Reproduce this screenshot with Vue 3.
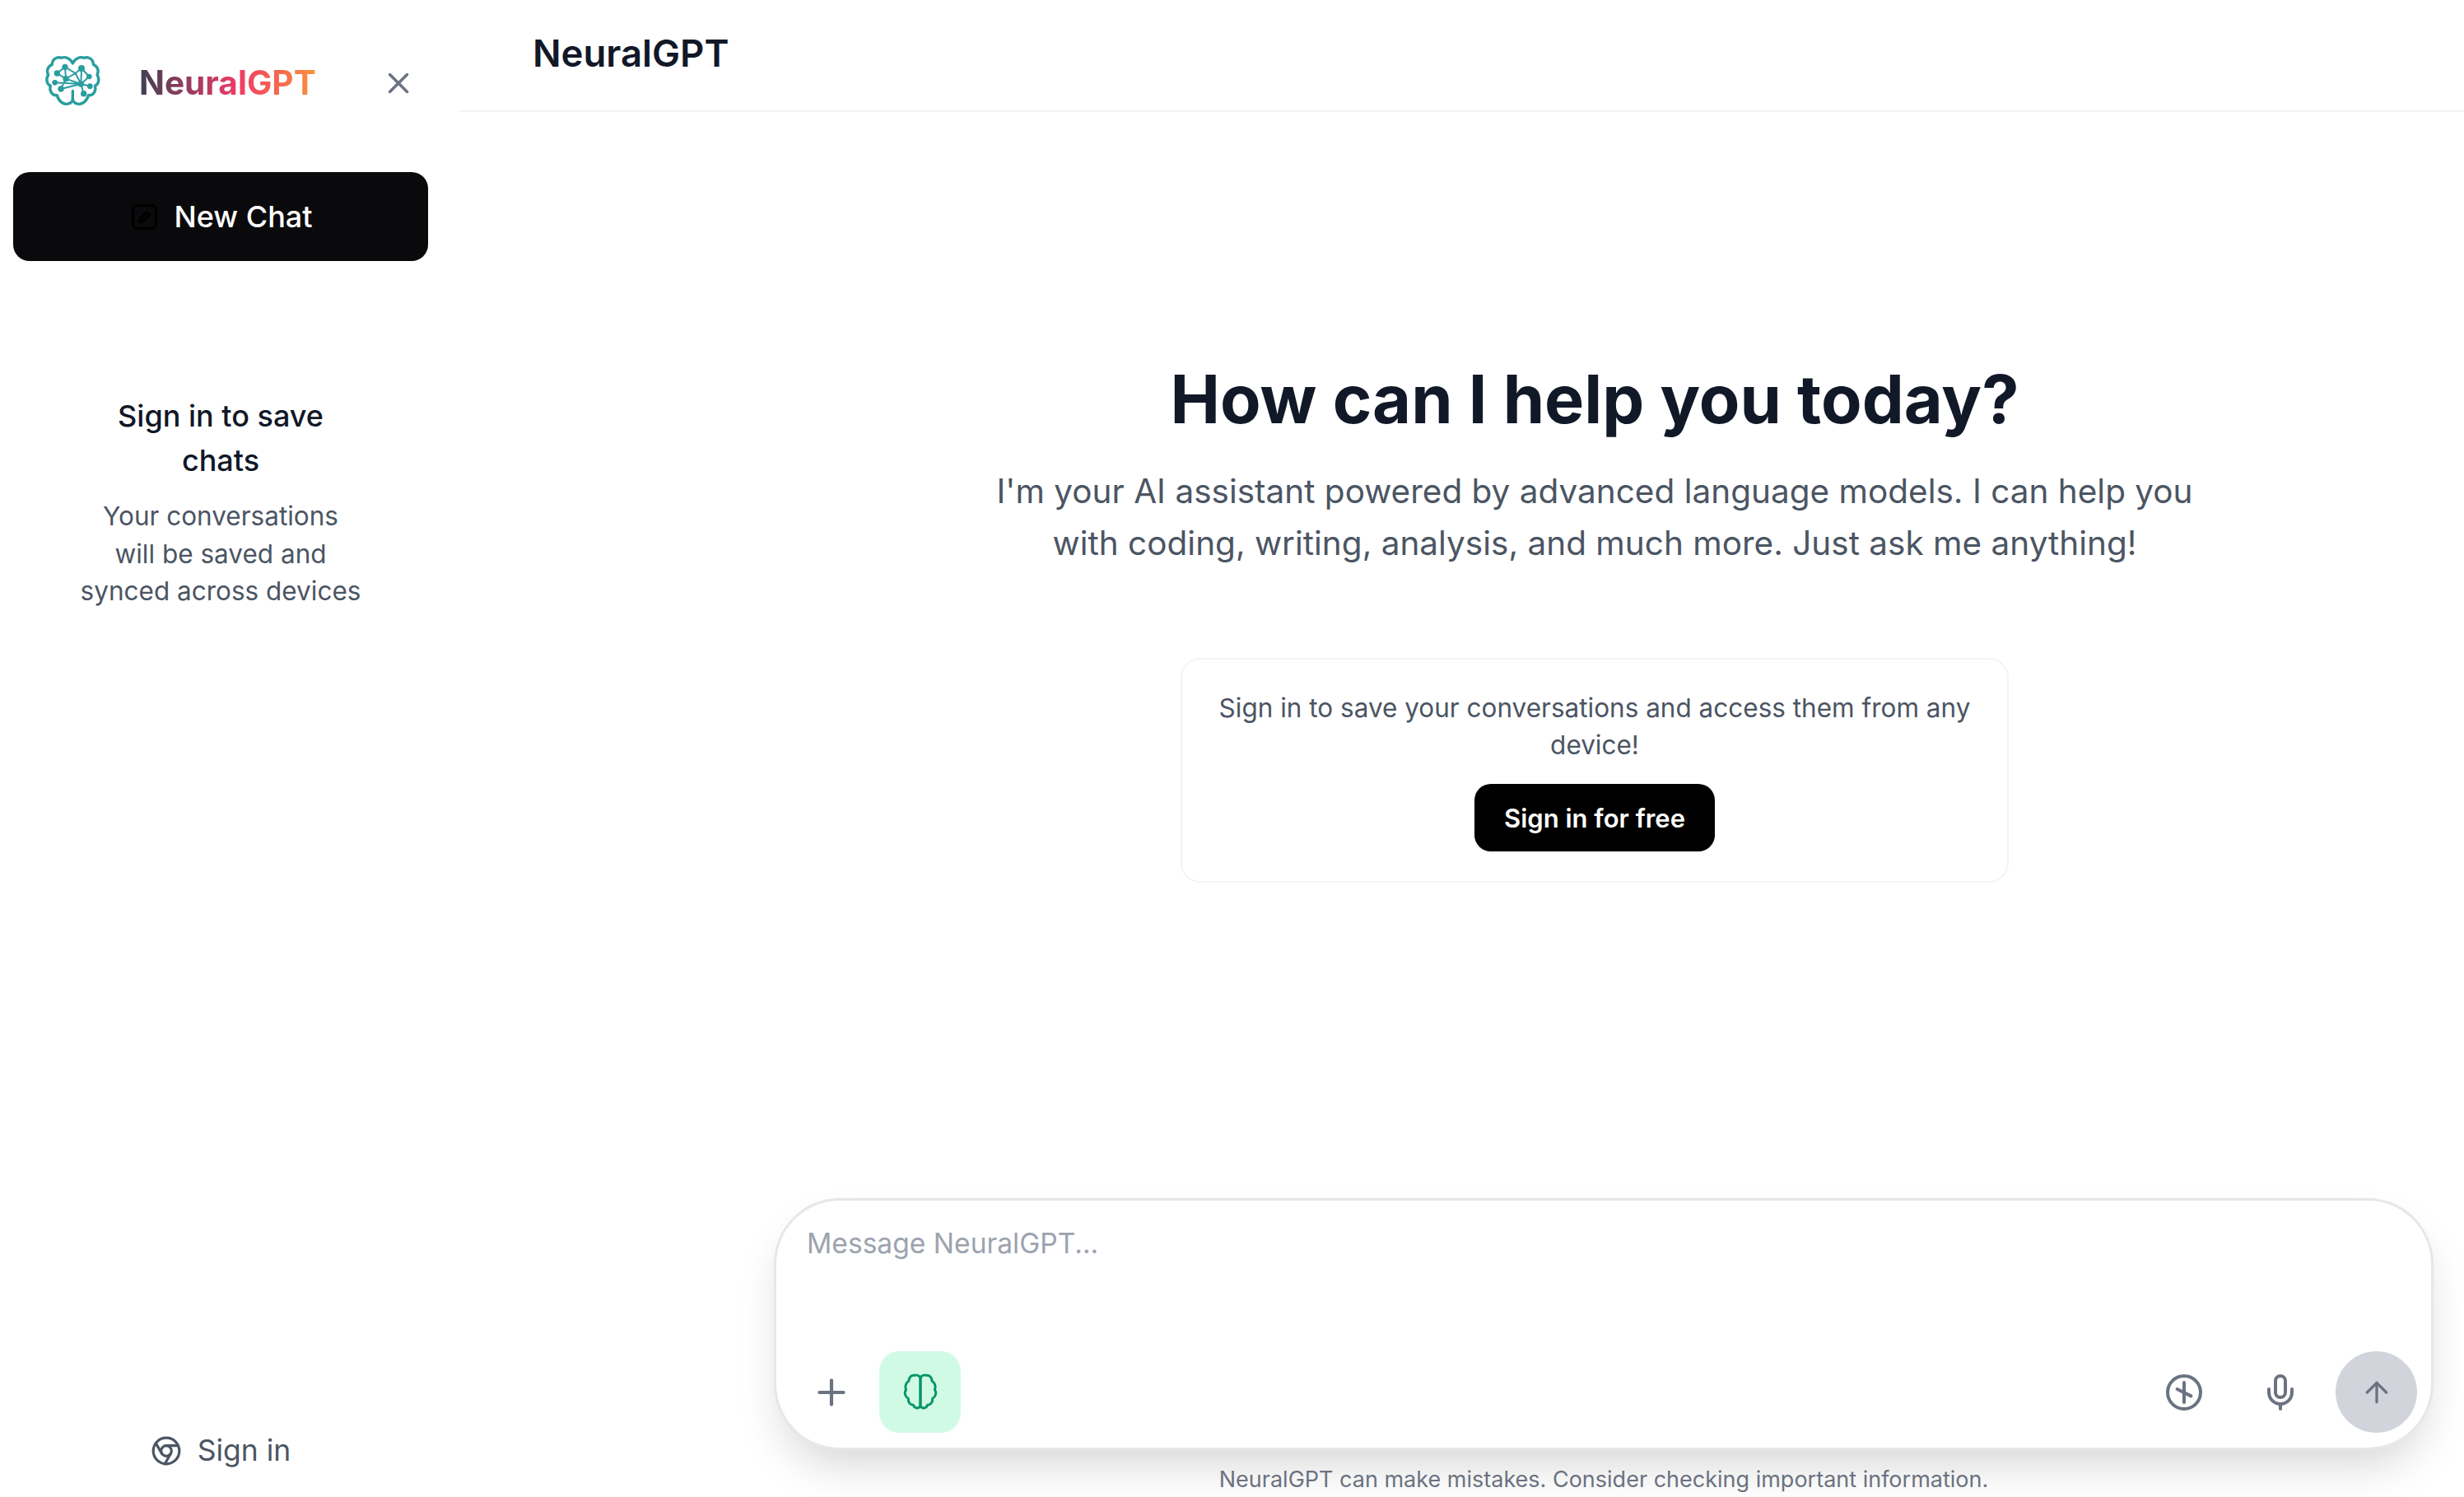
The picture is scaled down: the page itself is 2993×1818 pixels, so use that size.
<template>
  <div class="app">
    <aside class="sidebar">
      <div class="brand">
        <svg class="logo" viewBox="0 0 300 270" fill="none" stroke="#2a9d9f" stroke-width="10" stroke-linejoin="round" stroke-linecap="round">
          <path d="M145 72C138 54 118 46 104 52C88 46 70 56 70 76C54 82 48 100 56 114C46 128 50 148 64 154C58 172 70 190 88 188C92 208 112 226 130 218C140 218 145 208 145 196V172M145 72C152 54 172 46 186 52C202 46 220 56 220 76C236 82 242 100 234 114C244 128 240 148 226 154C232 172 220 190 202 188C198 208 178 226 160 218C150 218 145 208 145 196" />
          <path stroke-width="6" d="M80 142L175 147M120 128L175 147M102 165L175 147M117 85L120 128M88 108L120 128M117 85L88 108M120 128L155 108M117 85L155 108M155 108L177 90M177 90L175 147M177 90L205 120M205 120L175 147M175 147L208 155M175 147L185 182M155 108L175 147M120 128L102 165" />
          <g fill="#2a9d9f" stroke="none">
            <circle cx="117" cy="85" r="11" />
            <circle cx="88" cy="108" r="11" />
            <circle cx="80" cy="142" r="10" />
            <circle cx="120" cy="128" r="11" />
            <circle cx="102" cy="165" r="11" />
            <circle cx="177" cy="90" r="12" />
            <circle cx="205" cy="120" r="10" />
            <circle cx="175" cy="147" r="11" />
            <circle cx="208" cy="155" r="10" />
            <circle cx="185" cy="182" r="11" />
          </g>
        </svg>
        <span class="brand-name">NeuralGPT</span>
        <svg class="close" viewBox="0 0 24 24" fill="none" stroke="#6b7280" stroke-width="2" stroke-linecap="round" stroke-linejoin="round">
          <path d="M18 6 6 18" />
          <path d="m6 6 12 12" />
        </svg>
      </div>

      <button class="new-chat">
        <svg class="pen" viewBox="0 0 24 24" fill="none" stroke="#000" stroke-width="2" stroke-linecap="round" stroke-linejoin="round">
          <rect x="3" y="3" width="18" height="18" rx="3" />
          <path d="M8 16l1-3 5-5 2 2-5 5Z" />
        </svg>
        New Chat
      </button>

      <div class="save-note">
        <h3>Sign in to save chats</h3>
        <p>Your conversations<br>will be saved and<br>synced across devices</p>
      </div>

      <div class="side-signin">
        <svg class="chrome" viewBox="0 0 24 24" fill="none" stroke="#4b5563" stroke-width="2" stroke-linecap="round" stroke-linejoin="round">
          <circle cx="12" cy="12" r="10" />
          <circle cx="12" cy="12" r="4" />
          <line x1="21.17" y1="8" x2="12" y2="8" />
          <line x1="3.95" y1="6.06" x2="8.54" y2="14" />
          <line x1="10.88" y1="21.94" x2="15.46" y2="14" />
        </svg>
        Sign in
      </div>
    </aside>

    <main class="main">
      <header class="topbar">NeuralGPT</header>

      <section class="hero">
        <h1>How can I help you today?</h1>
        <p class="lead">I'm your AI assistant powered by advanced language models. I can help you with coding, writing, analysis, and much more. Just ask me anything!</p>
        <div class="card">
          <p>Sign in to save your conversations and access them from any device!</p>
          <button class="free-btn">Sign in for free</button>
        </div>
      </section>

      <section class="composer-wrap">
        <div class="composer">
          <div class="placeholder">Message NeuralGPT...</div>
          <div class="tools">
            <svg class="plus" viewBox="0 0 24 24" fill="none" stroke="#6b7280" stroke-width="2" stroke-linecap="round" stroke-linejoin="round">
              <path d="M5 12h14" />
              <path d="M12 5v14" />
            </svg>
            <div class="brain-btn">
              <svg viewBox="0 0 168 168" fill="none" stroke="#059669" stroke-width="9" stroke-linecap="round" stroke-linejoin="round">
                <path d="M84 32C80 22 70 19 62 22C50 20 42 30 42 42C32 48 26 62 32 74C24 84 28 100 40 106C38 120 48 130 58 130C62 142 78 146 84 132Z" />
                <path d="M84 32C88 22 98 19 106 22C118 20 126 30 126 42C136 48 142 62 136 74C144 84 140 100 128 106C130 120 120 130 110 130C106 142 90 146 84 132Z" />
              </svg>
            </div>
            <div class="spacer"></div>
            <svg class="tool-icon" viewBox="0 0 24 24" fill="none" stroke="#6b7280" stroke-width="2" stroke-linecap="round" stroke-linejoin="round">
              <circle cx="12" cy="12" r="10" />
              <path d="M12 6v12" />
              <path d="m7.8 10 8.4 4.2" />
            </svg>
            <svg class="tool-icon mic" viewBox="0 0 24 24" fill="none" stroke="#6b7280" stroke-width="2" stroke-linecap="round" stroke-linejoin="round">
              <path d="M12 2a3 3 0 0 0-3 3v7a3 3 0 0 0 6 0V5a3 3 0 0 0-3-3Z" />
              <path d="M19 10v2a7 7 0 0 1-14 0v-2" />
              <path d="M12 19v3" />
            </svg>
            <div class="send">
              <svg viewBox="0 0 24 24" fill="none" stroke="#6b7280" stroke-width="2" stroke-linecap="round" stroke-linejoin="round">
                <path d="m5 12 7-7 7 7" />
                <path d="M12 19V5" />
              </svg>
            </div>
          </div>
        </div>
        <p class="disclaimer">NeuralGPT can make mistakes. Consider checking important information.</p>
      </section>
    </main>
  </div>
</template>

<script setup>
</script>

<style>
html, body {
  margin: 0;
  background: #fff;
}
</style>

<style scoped>
.app {
  width: 2993px;
  height: 1818px;
  display: flex;
  overflow: hidden;
  background: #fff;
  font-family: Inter, "Liberation Sans", sans-serif;
}

.sidebar {
  width: 558px;
  flex-shrink: 0;
  box-sizing: border-box;
  padding: 0 38px 0 16px;
  display: flex;
  flex-direction: column;
}

.brand {
  height: 209px;
  padding: 0 0 8px 24px;
  box-sizing: border-box;
  display: flex;
  align-items: center;
}

.logo {
  width: 100px;
  height: 90px;
  margin-top: -6px;
  flex-shrink: 0;
}

.brand-name {
  margin-left: 29px;
  font-size: 40.6px;
  font-weight: 700;
  background: linear-gradient(90deg, #3f3f55, #ef3a66 55%, #fb923c);
  -webkit-background-clip: text;
  background-clip: text;
  color: transparent;
}

.close {
  width: 42px;
  height: 42px;
  margin-left: 79px;
}

.new-chat {
  height: 108px;
  width: 504px;
  border: none;
  border-radius: 20px;
  background: #0a0a0c;
  color: #fff;
  font-family: inherit;
  font-size: 36px;
  font-weight: 500;
  display: flex;
  align-items: center;
  justify-content: center;
  gap: 18px;
  padding: 0;
}

.pen {
  width: 37px;
  height: 37px;
}

.save-note {
  margin-top: 161px;
  text-align: center;
}

.save-note h3 {
  width: 320px;
  margin: 0 auto;
  font-size: 36px;
  line-height: 54px;
  font-weight: 500;
  color: #111827;
}

.save-note p {
  margin: 18px 0 0;
  font-size: 31.5px;
  line-height: 45.5px;
  color: #4b5563;
}

.side-signin {
  margin-top: auto;
  margin-bottom: 30px;
  display: flex;
  align-items: center;
  justify-content: center;
  gap: 19px;
  font-size: 35.5px;
  line-height: 52px;
  color: #4b5563;
}

.chrome {
  width: 38px;
  height: 38px;
}

.main {
  flex: 1;
  min-width: 0;
  display: flex;
  flex-direction: column;
}

.topbar {
  height: 136px;
  box-sizing: border-box;
  padding: 0 0 6px 89px;
  border-bottom: 2px solid #f3f4f6;
  display: flex;
  align-items: center;
  font-size: 45.5px;
  font-weight: 600;
  color: #111827;
}

.hero {
  flex: 1;
  padding: 290px 0 0 323px;
  display: flex;
  flex-direction: column;
  align-items: center;
  text-align: center;
}

.hero h1 {
  margin: 0;
  font-size: 81px;
  line-height: 118px;
  font-weight: 700;
  color: #111827;
}

.lead {
  width: 1480px;
  margin: 21px 0 0;
  font-size: 40.5px;
  line-height: 63px;
  color: #4b5563;
}

.card {
  width: 1006px;
  box-sizing: border-box;
  margin-top: 108px;
  padding: 36px 30px 36px;
  border: 2px solid #f3f4f6;
  border-radius: 24px;
  background: #fff;
}

.card p {
  margin: 0;
  font-size: 31.5px;
  line-height: 45px;
  color: #4b5563;
}

.free-btn {
  width: 292px;
  height: 82px;
  margin-top: 25px;
  border: none;
  border-radius: 20px;
  background: #000;
  color: #fff;
  font-family: inherit;
  font-size: 31px;
  font-weight: 600;
}

.composer-wrap {
  height: 363px;
  padding: 0 37px 0 382px;
  box-sizing: border-box;
  flex-shrink: 0;
}

.composer {
  height: 306px;
  box-sizing: border-box;
  padding: 27px 17px 18px 37px;
  border: 3px solid #e5e7eb;
  border-radius: 80px;
  background: #fff;
  box-shadow: 0 28px 56px -14px rgba(0, 0, 0, 0.18);
  display: flex;
  flex-direction: column;
  justify-content: space-between;
}

.placeholder {
  font-size: 33.6px;
  line-height: 50px;
  color: #9ca3af;
}

.tools {
  display: flex;
  align-items: center;
}

.plus {
  width: 50px;
  height: 50px;
  margin-left: 5px;
}

.brain-btn {
  width: 99px;
  height: 99px;
  margin-left: 33px;
  border-radius: 24px;
  background: #d1fae5;
  display: flex;
  align-items: center;
  justify-content: center;
}

.brain-btn svg {
  width: 56px;
  height: 56px;
}

.spacer {
  flex: 1;
}

.tool-icon {
  width: 48px;
  height: 48px;
}

.mic {
  margin-left: 69px;
  margin-right: 43px;
}

.send {
  width: 99px;
  height: 99px;
  border-radius: 50%;
  background: #d1d5db;
  display: flex;
  align-items: center;
  justify-content: center;
}

.send svg {
  width: 40px;
  height: 40px;
}

.disclaimer {
  margin: 17px 0 0;
  text-align: center;
  font-size: 27px;
  line-height: 38px;
  color: #6b7280;
}
</style>
